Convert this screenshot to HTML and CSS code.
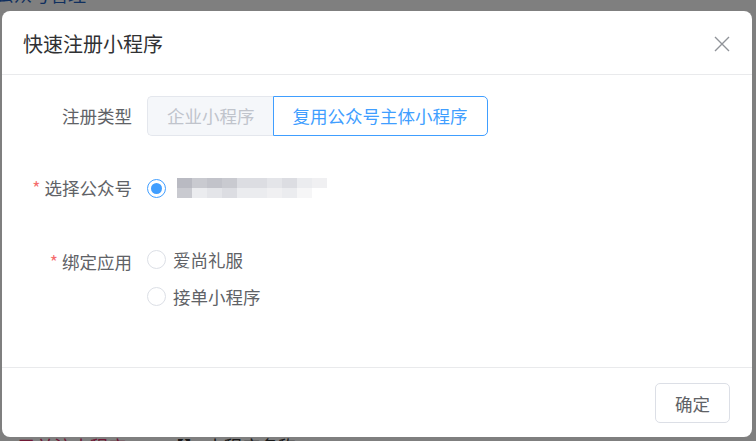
FILE: index.html
```html
<!DOCTYPE html>
<html lang="zh-CN">
<head>
<meta charset="utf-8">
<link rel="stylesheet" href="styles.css">
</head>
<body>
<div class="page">
  <div class="behind-top">公众号管理</div>
  <div class="behind-bottom"><span class="pink">已关注小程序</span><span class="dark">【】 小程序名称</span></div>
</div>
<div class="overlay">
  <div class="dialog">
    <div class="dialog-header">
      <span class="title">快速注册小程序</span>
      <svg class="close" width="16" height="16" viewBox="0 0 16 16"><path d="M1 1 L15 15 M15 1 L1 15" stroke="#909399" stroke-width="1.4" fill="none"/></svg>
    </div>
    <div class="dialog-body">
      <div class="form-item">
        <div class="label">注册类型</div>
        <div class="content">
          <div class="seg">
            <span class="seg-btn disabled">企业小程序</span>
            <span class="seg-btn active">复用公众号主体小程序</span>
          </div>
        </div>
      </div>
      <div class="form-item item2">
        <div class="label"><span class="star">*</span>选择公众号</div>
        <div class="content">
          <span class="radio checked"><span class="dot"></span></span>
          <span class="mosaic">
            <span class="mrow"><span class="b b0"></span><span class="b b2"></span><span class="b b3"></span><span class="b b2"></span><span class="b b4"></span><span class="b b4"></span><span class="b b5"></span><span class="b b4"></span><span class="b b6"></span><span class="b b7"></span></span>
            <span class="mrow"><span class="b b1"></span><span class="b b6"></span><span class="b b5"></span><span class="b b4"></span><span class="b b6"></span><span class="b b6"></span><span class="b b7"></span><span class="b b6"></span><span class="b b8"></span><span class="b b9"></span></span>
          </span>
        </div>
      </div>
      <div class="form-item item3">
        <div class="label"><span class="star">*</span>绑定应用</div>
        <div class="content radios">
          <label class="radio-item"><span class="radio"></span><span class="rtext">爱尚礼服</span></label>
          <label class="radio-item"><span class="radio"></span><span class="rtext">接单小程序</span></label>
        </div>
      </div>
    </div>
    <div class="dialog-footer">
      <button class="btn">确定</button>
    </div>
  </div>
</div>
</body>
</html>
```
FILE: styles.css
```css
* { box-sizing: border-box; }
html, body { margin: 0; padding: 0; }
body {
  width: 756px;
  height: 441px;
  overflow: hidden;
  position: relative;
  font-family: "Noto Sans CJK SC", "Noto Sans", sans-serif;
  background: #fff;
}
.page {
  width: 756px;
  height: 441px;
  display: flex;
  flex-direction: column;
  justify-content: space-between;
}
.behind-top {
  margin-top: -16px;
  margin-left: -4px;
  font-size: 18px;
  color: #1f5fbf;
  line-height: 20px;
}
.behind-bottom {
  display: flex;
  gap: 40px;
  margin-bottom: -15px;
  margin-left: 18px;
  font-size: 18px;
  line-height: 20px;
}
.behind-bottom .pink { color: #e0306a; }
.behind-bottom .dark { color: #333; }
.overlay {
  position: absolute;
  inset: 0;
  background: rgba(0, 0, 0, 0.5);
  padding: 11px 0 0 2px;
}
.dialog {
  width: 750px;
  height: 426px;
  background: #fff;
  border-radius: 8px;
  display: flex;
  flex-direction: column;
}
.dialog-header {
  height: 64px;
  border-bottom: 1px solid #e9eaec;
  display: flex;
  align-items: center;
  justify-content: space-between;
  padding: 0 22px 0 21px;
}
.title {
  font-size: 20px;
  color: #303133;
  line-height: 28px;
  padding-top: 2px;
}
.close { margin-top: 2px; }
.dialog-body {
  flex: 1;
  padding: 21px 20px 0 20px;
}
.form-item {
  display: flex;
  align-items: flex-start;
}
.item2 { margin-top: 32px; }
.item3 { margin-top: 34px; }
.label {
  width: 125px;
  flex: none;
  padding-right: 15px;
  text-align: right;
  font-size: 17.5px;
  line-height: 40px;
  height: 40px;
  color: #606266;
  white-space: nowrap;
}
.star { color: #f56c6c; margin-right: 4px; }
.content {
  display: flex;
  align-items: center;
  height: 40px;
}
.seg { display: flex; }
.seg-btn {
  height: 40px;
  line-height: 38px;
  font-size: 17.5px;
  border: 1px solid #dcdfe6;
  padding: 0 19px;
  white-space: nowrap;
  flex: none;
}
.seg-btn.disabled {
  background: #f5f7fa;
  color: #c0c4cc;
  border-color: #e4e7ed;
  border-radius: 5px 0 0 5px;
  border-right: none;
  padding: 0 18px 0 19px;
}
.seg-btn.active {
  color: #409eff;
  border-color: #409eff;
  border-radius: 0 5px 5px 0;
  padding: 0 19px 0 19px;
}
.radio {
  width: 19px;
  height: 19px;
  border: 1px solid #dcdfe6;
  border-radius: 50%;
  display: inline-flex;
  align-items: center;
  justify-content: center;
  background: #fff;
  flex: none;
}
.radio.checked {
  border: 1.5px solid #409eff;
}
.radio .dot {
  width: 11px;
  height: 11px;
  border-radius: 50%;
  background: #409eff;
}
.mosaic {
  margin-left: 11px;
  display: flex;
  flex-direction: column;
}
.mrow { display: flex; }
.b { width: 15px; height: 10px; }
.b0 { background: #b9bac2; }
.b1 { background: #c9cad0; }
.b2 { background: #c9cad0; }
.b3 { background: #c2c3ca; }
.b4 { background: #dcdde2; }
.b5 { background: #e4e5e9; }
.b6 { background: #ebecef; }
.b7 { background: #f0f0f2; }
.b8 { background: #f6f6f7; }
.b9 { background: #fff; }
.radios {
  flex-direction: column;
  align-items: flex-start;
  height: auto;
  gap: 3px;
}
.radio-item {
  height: 34px;
  display: flex;
  align-items: center;
}
.rtext {
  margin-left: 7px;
  font-size: 17.5px;
  color: #606266;
}
.dialog-footer {
  height: 70px;
  border-top: 1px solid #e9eaec;
  display: flex;
  justify-content: flex-end;
  align-items: flex-start;
  padding: 15px 22px 0 0;
}
.btn {
  width: 75px;
  height: 40px;
  border: 1px solid #dcdfe6;
  border-radius: 5px;
  background: #fff;
  font-family: inherit;
  font-size: 17.5px;
  color: #606266;
  padding: 0;
}
```
